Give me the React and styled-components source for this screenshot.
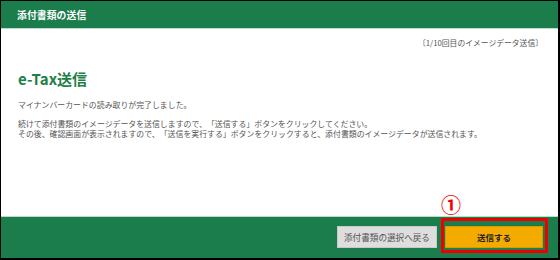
import React from "react";
import styled, { createGlobalStyle } from "styled-components";

const GlobalStyle = createGlobalStyle`
  html, body { margin: 0; padding: 0; background: #fff; }
  body {
    font-family: "Noto Sans CJK JP", "Noto Sans", sans-serif;
    text-spacing-trim: space-all;
  }
  * { box-sizing: border-box; }
`;

const Frame = styled.div`
  width: 560px;
  height: 260px;
  border-top: 1px solid #000;
  border-left: 1px solid #000;
  border-right: 2px solid #000;
  border-bottom: 2px solid #000;
  display: flex;
  flex-direction: column;
  background: #fff;
`;

const Header = styled.div`
  height: 28px;
  flex: none;
  background: #1a7d4b;
  border-bottom: 1px solid #bcdcc8;
  padding-left: 16px;
  display: flex;
  align-items: center;
  color: #fff;
  font-weight: bold;
  font-size: 9.8px;
  letter-spacing: 0.1px;
`;

const Body = styled.div`
  flex: 1;
  padding: 0 15px 0 17px;
  display: flex;
  flex-direction: column;
`;

const Counter = styled.div`
  margin-top: 9px;
  text-align: right;
  font-size: 7.8px;
  line-height: 10px;
  color: #555;
  text-spacing-trim: space-all;
`;

const Heading = styled.h1`
  margin: 22px 0 0;
  font-size: 15px;
  line-height: 18px;
  font-weight: bold;
  color: #1e8048;
`;

const Para = styled.p`
  margin: ${(p) => p.$gap}px 0 0;
  font-size: 7.9px;
  line-height: 10px;
  color: #555;
  text-spacing-trim: space-all;
`;

const Footer = styled.div`
  height: 42px;
  flex: none;
  background: #1a7d4b;
  border-top: 1px solid #bcdcc8;
  display: flex;
  justify-content: flex-end;
  align-items: flex-start;
  padding: 9px 15px 0 0;
  gap: 8px;
`;

const Button = styled.button`
  height: 22px;
  width: ${(p) => p.$w}px;
  padding: 0;
  font-family: inherit;
  font-size: ${(p) => (p.$primary ? 8.5 : 8.6)}px;
  font-weight: ${(p) => (p.$primary ? "bold" : "normal")};
  color: ${(p) => (p.$primary ? "#222" : "#555")};
  background: ${(p) => (p.$primary ? "#f4ab00" : "#dedede")};
  border: 1px solid ${(p) => (p.$primary ? "#d99a00" : "#c9c9c9")};
  display: flex;
  align-items: center;
  justify-content: center;
  cursor: pointer;
`;

const Highlight = styled.div`
  position: relative;
`;

const RedBox = styled.div`
  position: absolute;
  left: -4px;
  top: -8px;
  right: -5px;
  bottom: -5px;
  border: 3px solid #ee0000;
  pointer-events: none;
`;

const Marker = styled.div`
  position: absolute;
  left: -4px;
  top: -32px;
  font-size: 20px;
  line-height: 22px;
  font-weight: bold;
  color: #ee0000;
  font-family: "Noto Sans CJK JP", sans-serif;
`;

export default function App() {
  return (
    <>
      <GlobalStyle />
      <Frame>
        <Header>添付書類の送信</Header>
        <Body>
          <Counter>〔1/10回目のイメージデータ送信〕</Counter>
          <Heading>e-Tax送信</Heading>
          <Para $gap={12}>マイナンバーカードの読み取りが完了しました。</Para>
          <Para $gap={9}>
            続けて添付書類のイメージデータを送信しますので、「送信する」ボタンをクリックしてください。
            <br />
            その後、確認画面が表示されますので、「送信を実行する」ボタンをクリックすると、添付書類のイメージデータが送信されます。
          </Para>
        </Body>
        <Footer>
          <Button $w={100}>添付書類の選択へ戻る</Button>
          <Highlight>
            <Marker>①</Marker>
            <Button $w={98} $primary>送信する</Button>
            <RedBox />
          </Highlight>
        </Footer>
      </Frame>
    </>
  );
}
